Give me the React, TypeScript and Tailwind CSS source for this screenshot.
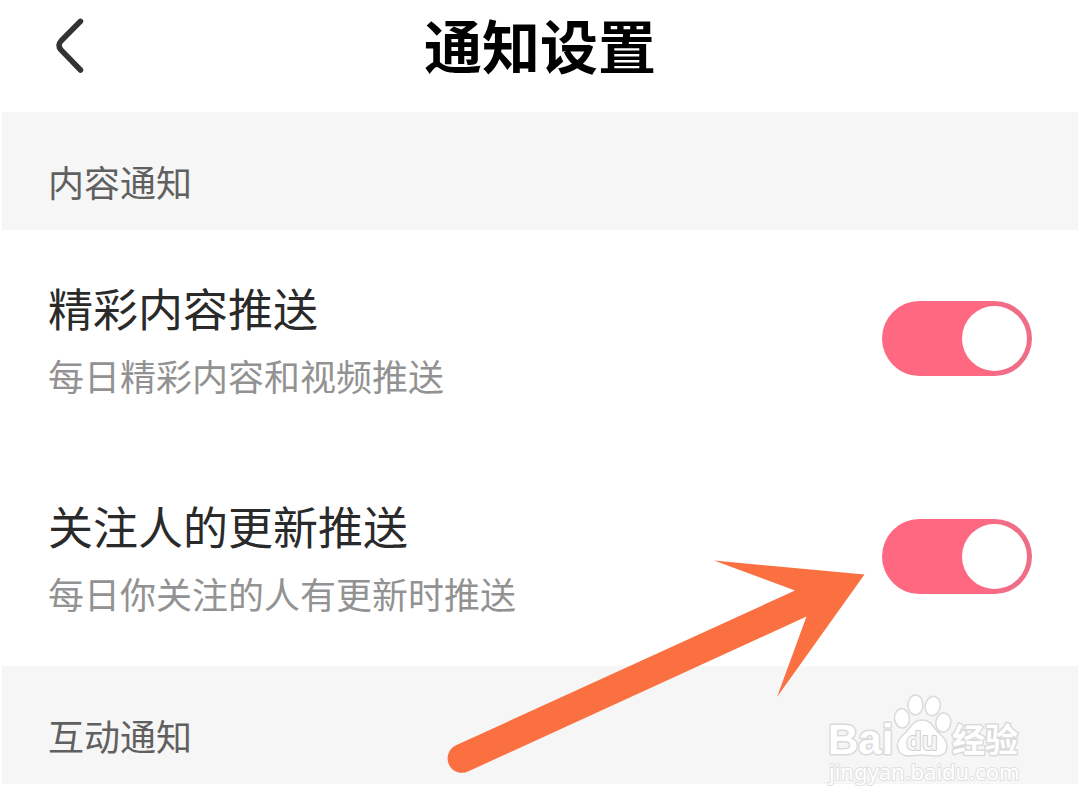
import { useState } from 'react';

type Setting = {
  id: string;
  title: string;
  description: string;
};

const contentSettings: Setting[] = [
  {
    id: 'featured',
    title: '精彩内容推送',
    description: '每日精彩内容和视频推送',
  },
  {
    id: 'following',
    title: '关注人的更新推送',
    description: '每日你关注的人有更新时推送',
  },
];

function SectionTitle({ children }: { children: string }) {
  return (
    <h2 className="mx-0.5 bg-[#f6f6f6] px-[46px] pt-[42px] pb-[22px] text-[36px] leading-[54px] text-[#606060]">
      {children}
    </h2>
  );
}

function SettingRow({ setting }: { setting: Setting }) {
  const [enabled, setEnabled] = useState(true);

  return (
    <li className="flex items-center justify-between px-12 pt-[41px] pb-[43px]">
      <div>
        <label
          htmlFor={setting.id}
          className="block text-[45px] leading-[74px] text-[#2a2a2a]"
        >
          {setting.title}
        </label>
        <p
          id={`${setting.id}-description`}
          className="text-[36px] leading-[60px] text-[#929292]"
        >
          {setting.description}
        </p>
      </div>
      <input
        type="checkbox"
        role="switch"
        id={setting.id}
        aria-describedby={`${setting.id}-description`}
        checked={enabled}
        onChange={(e) => setEnabled(e.target.checked)}
        className="flex h-[75px] w-[150px] shrink-0 cursor-pointer appearance-none items-center rounded-full bg-gray-300 px-[5px] before:size-[65px] before:rounded-full before:bg-white before:content-[''] checked:justify-end checked:bg-linear-to-r checked:from-[#ff6881] checked:from-65% checked:to-[#f06d87] checked:to-85%"
      />
    </li>
  );
}

function PointerArrow() {
  return (
    <svg
      viewBox="440 550 430 230"
      className="pointer-events-none absolute top-[550px] right-[210px] h-[230px] w-[430px]"
      fill="#fb7041"
      aria-hidden="true"
    >
      <path d="M864.5 574.5 L714 560.5 L795 590.5 L456 745.3 A14.2 14.2 0 0 0 468 771.5 L806.5 616.5 L777 697 Z" />
    </svg>
  );
}

function Watermark() {
  return (
    <svg
      viewBox="820 685 210 110"
      className="pointer-events-none absolute top-[685px] right-[50px] h-[110px] w-[210px]"
      fill="#ffffff"
      stroke="#dadada"
      strokeWidth="2"
      strokeLinejoin="round"
      role="img"
      aria-label="Baidu 经验"
    >
      <g style={{ paintOrder: 'stroke' }}>
        <text
          x="828"
          y="754"
          fontSize="42"
          fontWeight="700"
          fontFamily="Liberation Sans, sans-serif"
          strokeWidth="3"
        >
          Bai
        </text>
        <text
          x="952"
          y="752"
          fontSize="33"
          fontWeight="700"
          fontFamily="Noto Sans CJK SC, sans-serif"
          strokeWidth="3"
        >
          经验
        </text>
        <text
          x="829"
          y="780"
          fontSize="22"
          fontFamily="Noto Sans, sans-serif"
          stroke="#e0e0e0"
        >
          jingyan.baidu.com
        </text>
      </g>
      <g strokeWidth="1.5">
        <ellipse cx="902" cy="718.3" rx="7.5" ry="9.7" transform="rotate(-6 902 718.3)" />
        <ellipse cx="915.5" cy="704.9" rx="7.5" ry="10" />
        <ellipse cx="932.7" cy="706" rx="7.5" ry="9.7" transform="rotate(12 932.7 706)" />
        <ellipse cx="943.3" cy="722.5" rx="7.5" ry="9.7" transform="rotate(8 943.3 722.5)" />
        <path d="M922 720 C912 720 911 728 904 734 C897 740 896 746 899 751 C903 759 914 755 922 755 C931 755 942 759 946 751 C949 744 946 739 940 734 C933 728 932 720 922 720 Z" />
      </g>
      <text
        x="906"
        y="750"
        fontSize="25"
        fontWeight="600"
        fontFamily="Noto Sans, sans-serif"
        strokeWidth="2"
        fill="#f6f6f6"
        stroke="#d0d0d0"
        style={{ paintOrder: 'stroke' }}
      >
        du
      </text>
    </svg>
  );
}

export default function App() {
  return (
    <div className="relative min-h-screen overflow-hidden bg-white font-['Noto_Sans_CJK_SC',sans-serif]">
      <header className="relative flex h-28 items-center justify-center pb-6">
        <button
          type="button"
          aria-label="返回"
          className="absolute top-3 left-9 size-[68px]"
        >
          <svg
            viewBox="36 12 68 68"
            className="size-full"
            fill="none"
            stroke="#333333"
            strokeWidth="5.5"
            strokeLinecap="round"
          >
            <path d="M80.5 21.3 L61 41 Q57 45.3 61 49.8 L80.5 70" />
          </svg>
        </button>
        <h1 className="text-[58px] leading-[84px] font-bold text-black">
          通知设置
        </h1>
      </header>

      <main>
        <section>
          <SectionTitle>内容通知</SectionTitle>
          <ul>
            {contentSettings.map((setting) => (
              <SettingRow key={setting.id} setting={setting} />
            ))}
          </ul>
        </section>
        <section>
          <SectionTitle>互动通知</SectionTitle>
        </section>
      </main>

      <PointerArrow />
      <Watermark />
    </div>
  );
}
